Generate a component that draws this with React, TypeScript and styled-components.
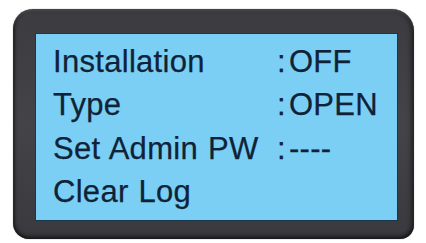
import { Fragment } from "react";
import styled, { createGlobalStyle } from "styled-components";

const GlobalStyle = createGlobalStyle`
  html, body {
    margin: 0;
    padding: 0;
    background: #ffffff;
  }
  body {
    width: 426px;
    height: 243px;
    overflow: hidden;
  }
`;

const Page = styled.div`
  padding: 9px 12px 0 13px;
`;

const Bezel = styled.div`
  width: 401px;
  height: 230px;
  box-sizing: border-box;
  padding: 24px 16px 18px 22px;
  background: linear-gradient(180deg, #3c3b40 0%, #444348 50%, #3a393e 100%);
  border-radius: 20px 22px 14px 16px;
  box-shadow:
    inset 0 2px 2px rgba(255, 255, 255, 0.12),
    inset 2px 0 3px rgba(0, 0, 0, 0.35),
    inset -3px 0 4px rgba(0, 0, 0, 0.4),
    inset 0 -3px 4px rgba(0, 0, 0, 0.45),
    0 0 1px rgba(0, 0, 0, 0.6);
`;

const Screen = styled.div`
  height: 100%;
  box-sizing: border-box;
  background: #7ccff4;
  border: 1.5px solid #1a3550;
  padding: 6px 0 0 17px;
  display: grid;
  grid-template-columns: 224px 1fr;
  grid-auto-rows: 43.4px;
  align-items: center;
  font-family: "Liberation Sans", Arial, sans-serif;
  font-size: 31px;
  letter-spacing: 0.3px;
  word-spacing: 1px;
  line-height: 43.4px;
  color: #0f2338;
  -webkit-text-stroke: 0.25px #0f2338;
`;

const Label = styled.div`
  white-space: nowrap;
`;

const Value = styled.div`
  display: flex;
  white-space: nowrap;
`;

const Colon = styled.span`
  margin-right: 3px;
`;

const rows: [string, string | null][] = [
  ["Installation", "OFF"],
  ["Type", "OPEN"],
  ["Set Admin PW", "----"],
  ["Clear Log", null],
];

export default function App() {
  return (
    <>
      <GlobalStyle />
      <Page>
        <Bezel>
          <Screen>
            {rows.map(([label, value]) => (
              <Fragment key={label}>
                <Label>{label}</Label>
                <Value>
                  {value !== null && (
                    <>
                      <Colon>:</Colon>
                      {value}
                    </>
                  )}
                </Value>
              </Fragment>
            ))}
          </Screen>
        </Bezel>
      </Page>
    </>
  );
}
